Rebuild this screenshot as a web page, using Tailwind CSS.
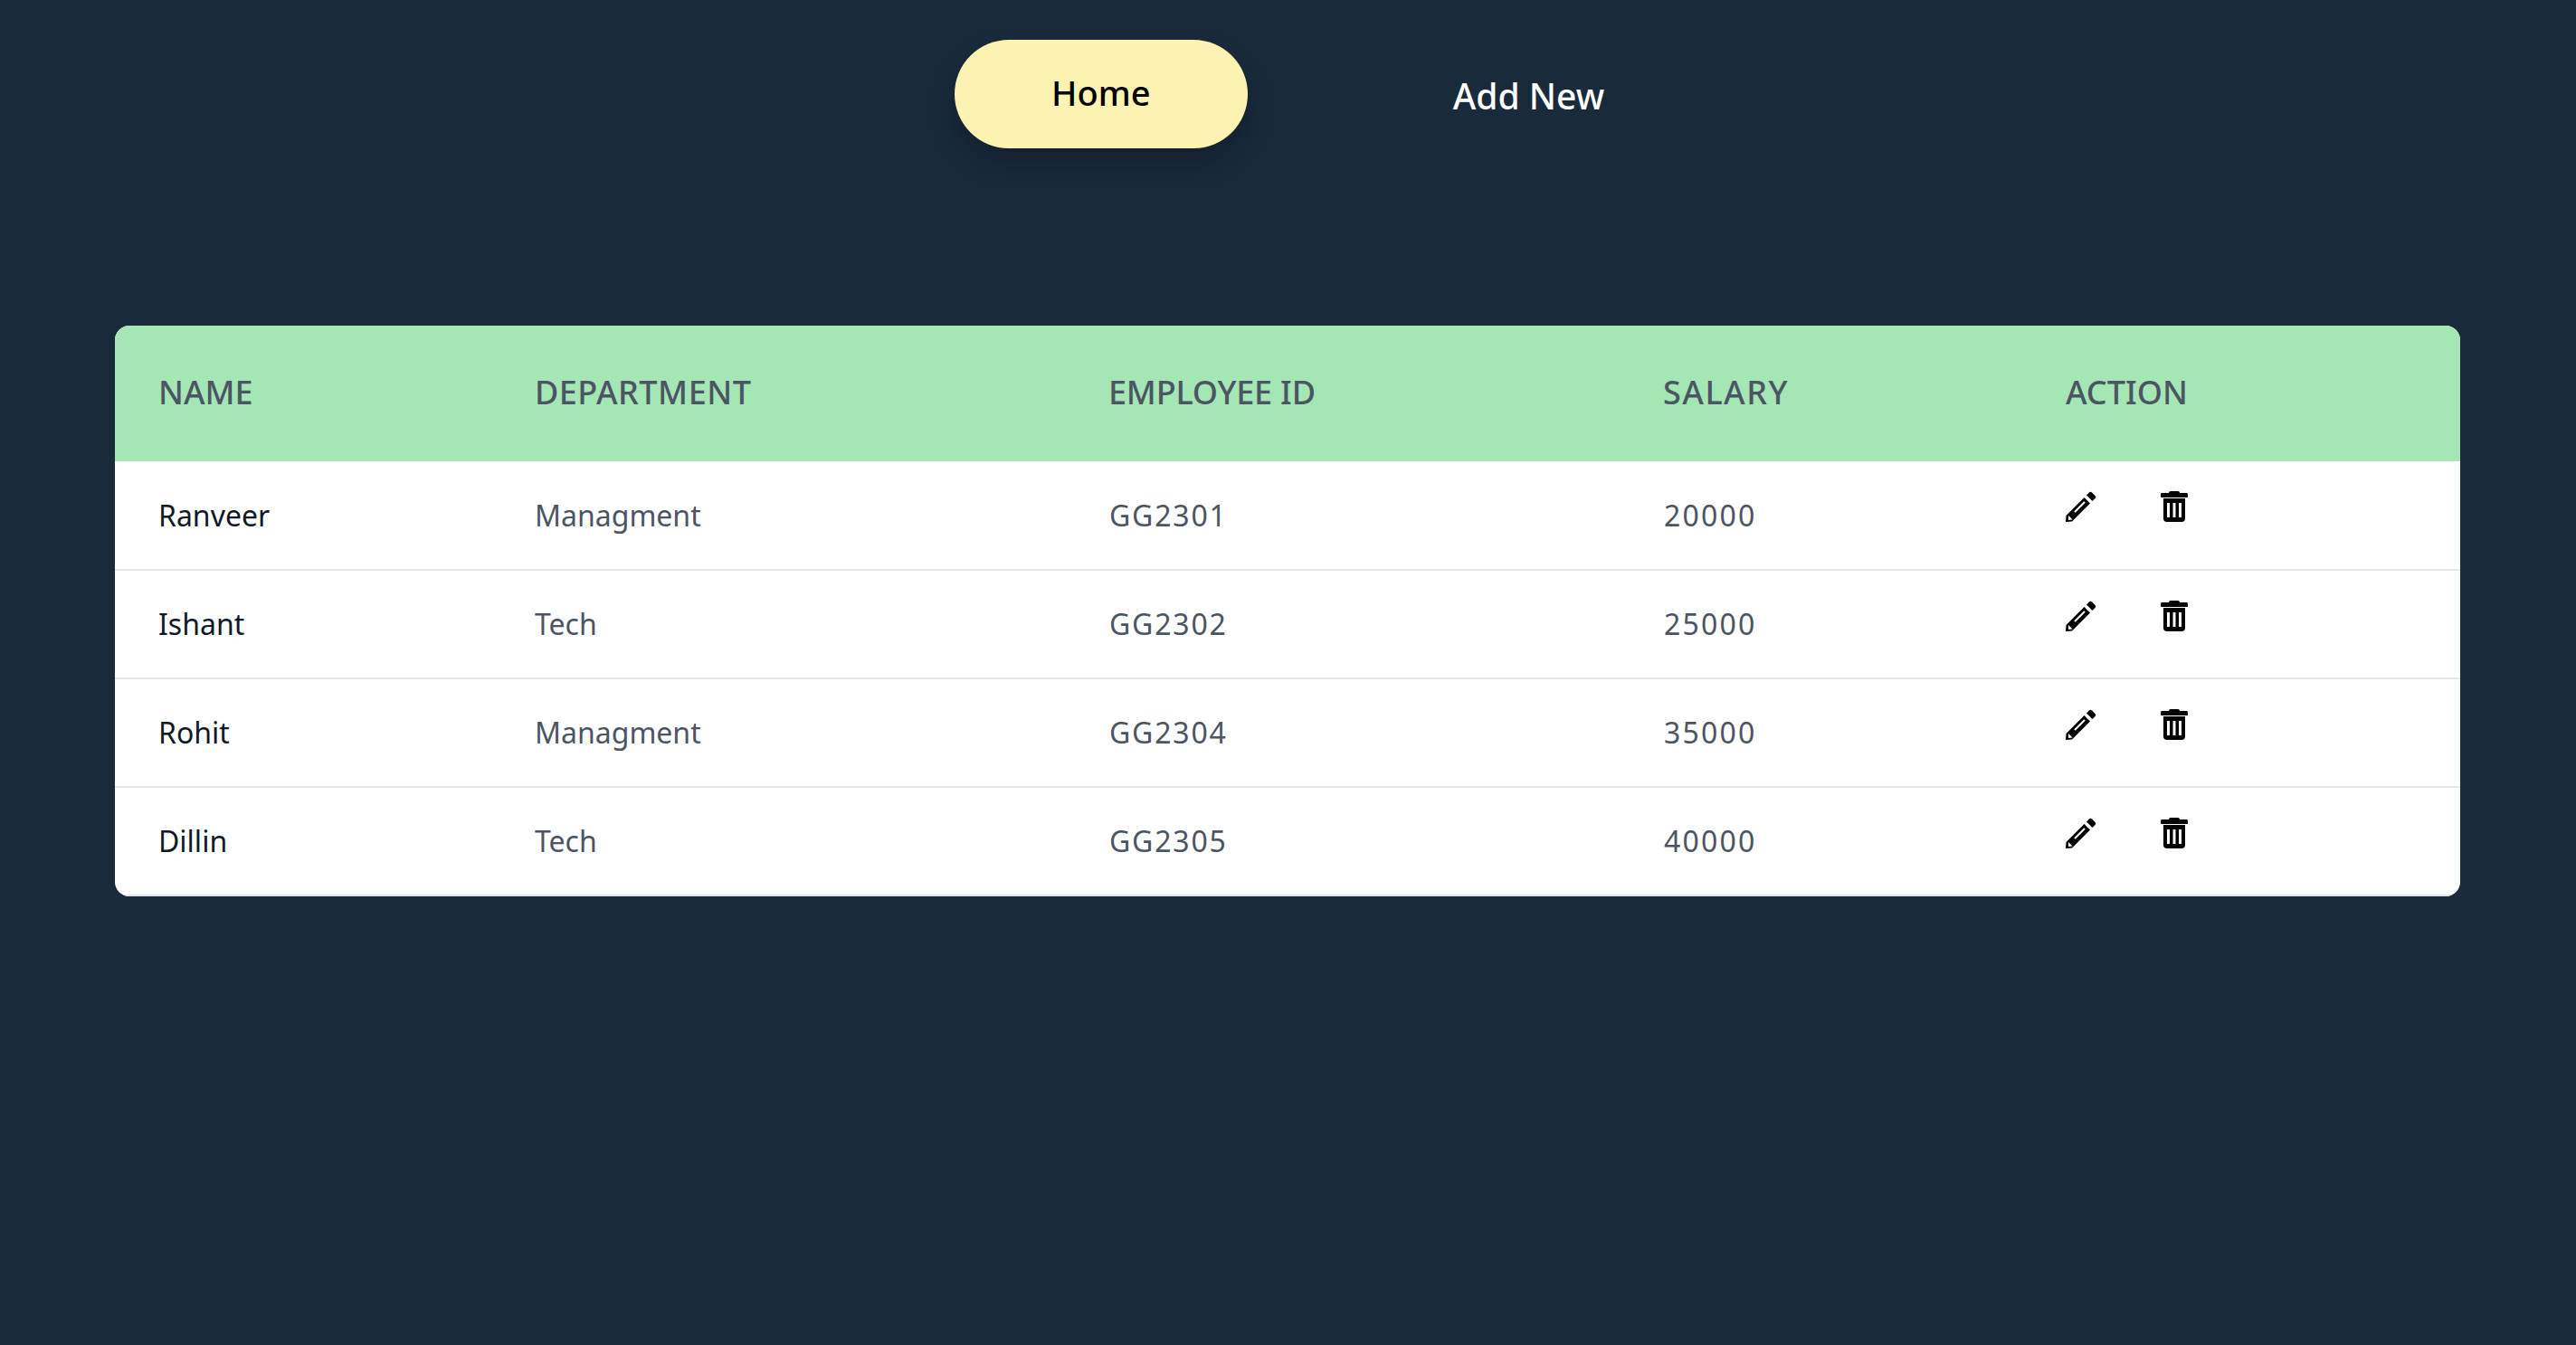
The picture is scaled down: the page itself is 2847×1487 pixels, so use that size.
<!DOCTYPE html>
<html lang="en">
<head>
  <meta charset="UTF-8" />
  <title>Employees</title>
  <script src="https://cdn.jsdelivr.net/npm/@tailwindcss/browser@4"></script>
</head>
<body class="bg-[#192a3b] min-h-screen font-['Noto_Sans',sans-serif]">

  <nav class="flex justify-center pt-[44px] pr-[2px]">
    <a class="flex items-center justify-center w-[324px] h-[120px] pb-[3px] rounded-[60px] bg-[#fdf3b0] text-black text-[38px] font-medium shadow-[0_16px_30px_rgba(0,0,0,0.22)]">Home</a>
    <a class="pl-[227px] pr-[17px] mt-[30px] h-[64px] leading-[64px] text-white text-[39px] font-medium">Add New</a>
  </nav>

  <div class="ml-[127px] mt-[196px] w-[2592px] rounded-2xl overflow-hidden bg-white">
    <table class="w-full table-fixed border-collapse">
      <colgroup>
        <col class="w-[416px]" /><col class="w-[634px]" /><col class="w-[612px]" /><col class="w-[445px]" /><col />
      </colgroup>
      <thead class="bg-[#a5e6b5] text-[#4b5563] text-[36px]">
        <tr class="h-[150px]">
          <th class="pl-[48px] pb-[3px] text-left font-medium">NAME</th>
          <th class="pl-[48px] pb-[3px] text-left font-medium tracking-[0.5px]">DEPARTMENT</th>
          <th class="pl-[48px] pb-[3px] text-left font-medium tracking-[-0.2px]">EMPLOYEE ID</th>
          <th class="pl-[49px] pb-[3px] text-left font-medium tracking-[1.5px]">SALARY</th>
          <th class="pl-[49px] pb-[3px] text-left font-medium">ACTION</th>
        </tr>
      </thead>
      <tbody class="text-[32px] text-[#4b5563]">
        <tr class="h-[120px] border-b-2 border-[#e5e7eb]">
          <td class="pl-[48px] text-[#111827]">Ranveer</td>
          <td class="pl-[48px]">Managment</td>
          <td class="pl-[49px] tracking-[1.8px]">GG2301</td>
          <td class="pl-[50px] tracking-[2.2px]">20000</td>
          <td class="pl-[49px] pt-[33px] align-top">
            <div class="flex items-start gap-[71px]">
              <svg class="w-[34px] h-[34px]" viewBox="0 0 34 34" fill="black"><path d="M0.5 27L20.5 7L27 13.5L7 33.5L0 34Z"/><path d="M23 4.5L26 1.5Q27.500 0 29 1.500L32.500 5Q34 6.500 32.500 8L29.500 11Z"/><path d="M10 23L21 12" stroke="white" stroke-width="2"/><path d="M3 27L7.500 31.500L3 32Z" fill="white"/></svg>
              <svg class="w-[30px] h-[34px]" viewBox="0 0 30 34" fill="black"><path d="M9 2Q9 0 11 0H19Q21 0 21 2H29Q30 2 30 4V6Q30 7 29 7H1Q0 7 0 6V4Q0 2 1 2Z"/><path d="M3 8H27V30Q27 34 23 34H7Q3 34 3 30ZM7 13V29H10V13ZM13.500 13V29H16.500V13ZM20 13V29H23V13Z" fill-rule="evenodd"/></svg>
            </div>
          </td>
        </tr>
        <tr class="h-[120px] border-b-2 border-[#e5e7eb]">
          <td class="pl-[48px] text-[#111827]">Ishant</td>
          <td class="pl-[48px]">Tech</td>
          <td class="pl-[49px] tracking-[1.8px]">GG2302</td>
          <td class="pl-[50px] tracking-[2.2px]">25000</td>
          <td class="pl-[49px] pt-[33px] align-top">
            <div class="flex items-start gap-[71px]">
              <svg class="w-[34px] h-[34px]" viewBox="0 0 34 34" fill="black"><path d="M0.5 27L20.5 7L27 13.5L7 33.5L0 34Z"/><path d="M23 4.5L26 1.5Q27.500 0 29 1.500L32.500 5Q34 6.500 32.500 8L29.500 11Z"/><path d="M10 23L21 12" stroke="white" stroke-width="2"/><path d="M3 27L7.500 31.500L3 32Z" fill="white"/></svg>
              <svg class="w-[30px] h-[34px]" viewBox="0 0 30 34" fill="black"><path d="M9 2Q9 0 11 0H19Q21 0 21 2H29Q30 2 30 4V6Q30 7 29 7H1Q0 7 0 6V4Q0 2 1 2Z"/><path d="M3 8H27V30Q27 34 23 34H7Q3 34 3 30ZM7 13V29H10V13ZM13.500 13V29H16.500V13ZM20 13V29H23V13Z" fill-rule="evenodd"/></svg>
            </div>
          </td>
        </tr>
        <tr class="h-[120px] border-b-2 border-[#e5e7eb]">
          <td class="pl-[48px] text-[#111827]">Rohit</td>
          <td class="pl-[48px]">Managment</td>
          <td class="pl-[49px] tracking-[1.8px]">GG2304</td>
          <td class="pl-[50px] tracking-[2.2px]">35000</td>
          <td class="pl-[49px] pt-[33px] align-top">
            <div class="flex items-start gap-[71px]">
              <svg class="w-[34px] h-[34px]" viewBox="0 0 34 34" fill="black"><path d="M0.5 27L20.5 7L27 13.5L7 33.5L0 34Z"/><path d="M23 4.5L26 1.5Q27.500 0 29 1.500L32.500 5Q34 6.500 32.500 8L29.500 11Z"/><path d="M10 23L21 12" stroke="white" stroke-width="2"/><path d="M3 27L7.500 31.500L3 32Z" fill="white"/></svg>
              <svg class="w-[30px] h-[34px]" viewBox="0 0 30 34" fill="black"><path d="M9 2Q9 0 11 0H19Q21 0 21 2H29Q30 2 30 4V6Q30 7 29 7H1Q0 7 0 6V4Q0 2 1 2Z"/><path d="M3 8H27V30Q27 34 23 34H7Q3 34 3 30ZM7 13V29H10V13ZM13.500 13V29H16.500V13ZM20 13V29H23V13Z" fill-rule="evenodd"/></svg>
            </div>
          </td>
        </tr>
        <tr class="h-[120px] border-b-2 border-[#e5e7eb]">
          <td class="pl-[48px] text-[#111827]">Dillin</td>
          <td class="pl-[48px]">Tech</td>
          <td class="pl-[49px] tracking-[1.8px]">GG2305</td>
          <td class="pl-[50px] tracking-[2.2px]">40000</td>
          <td class="pl-[49px] pt-[33px] align-top">
            <div class="flex items-start gap-[71px]">
              <svg class="w-[34px] h-[34px]" viewBox="0 0 34 34" fill="black"><path d="M0.5 27L20.5 7L27 13.5L7 33.5L0 34Z"/><path d="M23 4.5L26 1.5Q27.500 0 29 1.500L32.500 5Q34 6.500 32.500 8L29.500 11Z"/><path d="M10 23L21 12" stroke="white" stroke-width="2"/><path d="M3 27L7.500 31.500L3 32Z" fill="white"/></svg>
              <svg class="w-[30px] h-[34px]" viewBox="0 0 30 34" fill="black"><path d="M9 2Q9 0 11 0H19Q21 0 21 2H29Q30 2 30 4V6Q30 7 29 7H1Q0 7 0 6V4Q0 2 1 2Z"/><path d="M3 8H27V30Q27 34 23 34H7Q3 34 3 30ZM7 13V29H10V13ZM13.500 13V29H16.500V13ZM20 13V29H23V13Z" fill-rule="evenodd"/></svg>
            </div>
          </td>
        </tr>
      </tbody>
    </table>
  </div>
</body>
</html>
